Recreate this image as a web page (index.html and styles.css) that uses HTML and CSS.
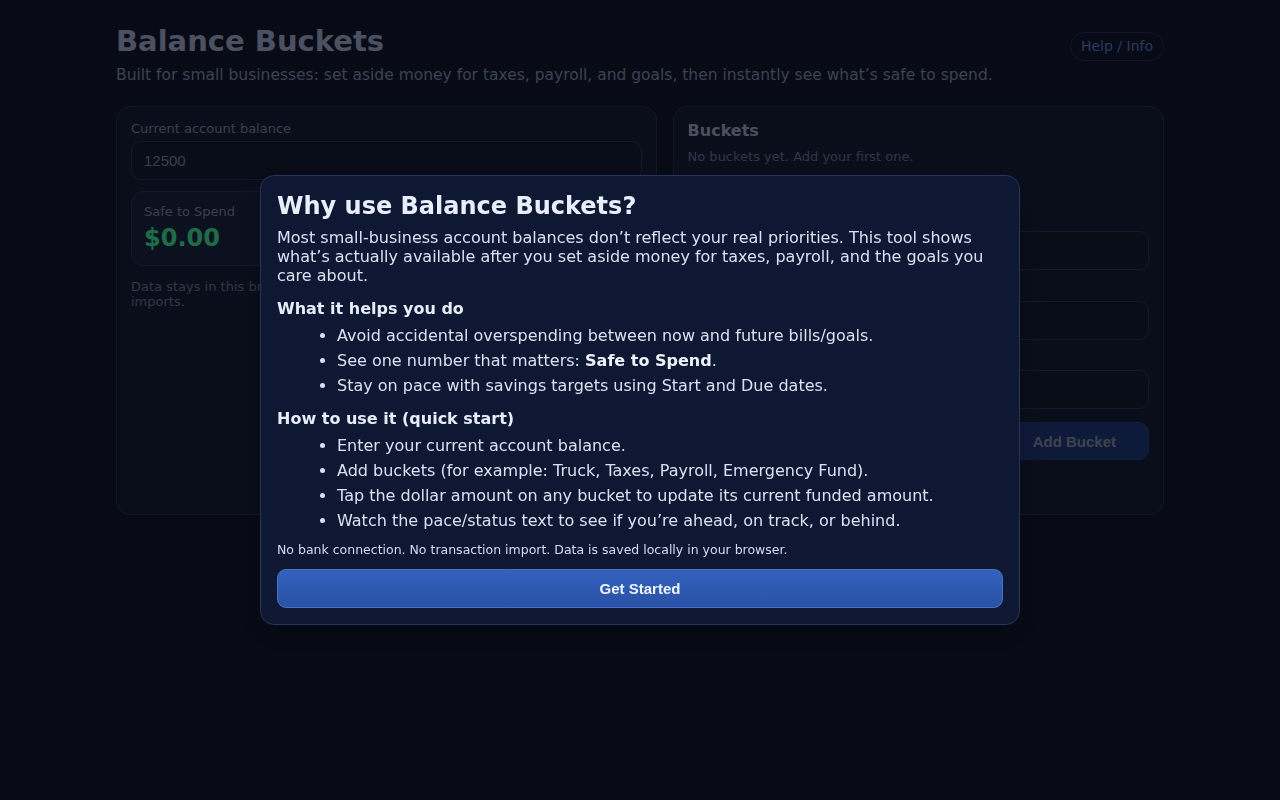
FILE: index.html
```html
<!DOCTYPE html>
<html lang="en">
<head>
<meta charset="utf-8">
<title>Balance Buckets</title>
<link rel="stylesheet" href="styles.css">
</head>
<body>
<div class="page">
  <header class="header">
    <div class="brand">
      <h1 class="title">Balance Buckets</h1>
      <p class="subtitle">Built for small businesses: set aside money for taxes, payroll, and goals, then instantly see what’s safe to spend.</p>
    </div>
    <button class="help-btn" type="button">Help / Info</button>
  </header>

  <main class="cards">
    <section class="card">
      <label class="field-label" for="balance">Current account balance</label>
      <input class="input" id="balance" type="text" placeholder="12500">
      <div class="safe-box">
        <div class="safe-label">Safe to Spend</div>
        <div class="safe-value">$0.00</div>
      </div>
      <p class="muted-note">Data stays in this browser. No bank connection and no transaction or file imports.</p>
    </section>

    <section class="card">
      <h2 class="card-title">Buckets</h2>
      <p class="empty">No buckets yet. Add your first one.</p>
      <h3 class="form-title">Add a bucket</h3>
      <div class="form">
        <div class="form-row">
          <label class="field-label" for="bname">Bucket name</label>
          <input class="input" id="bname" type="text">
        </div>
        <div class="form-row">
          <label class="field-label" for="btarget">Target amount</label>
          <input class="input" id="btarget" type="text">
        </div>
        <div class="form-row">
          <label class="field-label" for="bdue">Due date</label>
          <input class="input" id="bdue" type="text">
        </div>
        <div class="form-actions">
          <button class="add-btn" type="button">Add Bucket</button>
        </div>
      </div>
    </section>
  </main>
</div>

<div class="backdrop">
  <div class="modal" role="dialog" aria-labelledby="modal-title">
    <h2 class="modal-title" id="modal-title">Why use Balance Buckets?</h2>
    <p class="modal-text">Most small-business account balances don’t reflect your real priorities. This tool shows what’s actually available after you set aside money for taxes, payroll, and the goals you care about.</p>
    <h3 class="modal-heading">What it helps you do</h3>
    <ul class="modal-list">
      <li>Avoid accidental overspending between now and future bills/goals.</li>
      <li>See one number that matters: <strong>Safe to Spend</strong>.</li>
      <li>Stay on pace with savings targets using Start and Due dates.</li>
    </ul>
    <h3 class="modal-heading">How to use it (quick start)</h3>
    <ul class="modal-list">
      <li>Enter your current account balance.</li>
      <li>Add buckets (for example: Truck, Taxes, Payroll, Emergency Fund).</li>
      <li>Tap the dollar amount on any bucket to update its current funded amount.</li>
      <li>Watch the pace/status text to see if you’re ahead, on track, or behind.</li>
    </ul>
    <p class="modal-note">No bank connection. No transaction import. Data is saved locally in your browser.</p>
    <button class="start-btn" type="button">Get Started</button>
  </div>
</div>
</body>
</html>
```

FILE: styles.css
```css
* { box-sizing: border-box; }

html, body {
  margin: 0;
  height: 100%;
}

body {
  background: #121831;
  color: #a4b2d8;
  font-family: "DejaVu Sans", "Noto Sans", sans-serif;
  font-size: 16px;
  line-height: 1.2;
}

.page {
  max-width: 1080px;
  margin: 0 auto;
  padding: 24px 16px;
}

.header {
  display: flex;
  justify-content: space-between;
  align-items: flex-start;
  gap: 16px;
}

.title {
  margin: 0;
  font-size: 29px;
  font-weight: 700;
  line-height: 1.2;
  color: #a6b3d6;
}

.subtitle {
  margin: 7px 0 0;
  font-size: 15.5px;
  line-height: 19px;
  color: #8393b6;
}

.help-btn {
  margin-top: 8px;
  padding: 5px 10px;
  border: 1px solid #26335a;
  border-radius: 999px;
  background: transparent;
  color: #5f7fd8;
  font-family: "DejaVu Sans", sans-serif;
  font-size: 14px;
  line-height: 1.2;
}

.cards {
  display: grid;
  grid-template-columns: 1.1fr 1fr;
  gap: 16px;
  margin-top: 21px;
  min-height: 409px;
}

.card {
  background: #18203c;
  border: 1px solid #27334f;
  border-radius: 14px;
  padding: 14px;
  display: flex;
  flex-direction: column;
}

.field-label {
  display: block;
  font-size: 13px;
  color: #7f8dab;
  margin-bottom: 5px;
}

.input {
  display: block;
  width: 100%;
  height: 39px;
  padding: 0 12px;
  background: #151d36;
  border: 1px solid #2c3857;
  border-radius: 10px;
  color: #c8d2ea;
  font-family: "Liberation Sans", Arial, sans-serif;
  font-size: 15px;
}

.input::placeholder { color: #7e8ba8; }

.safe-box {
  margin-top: 11px;
  padding: 12px;
  background: #1c2645;
  border: 1px solid #2a3859;
  border-radius: 12px;
}

.safe-label {
  font-size: 13px;
  color: #7f8dab;
}

.safe-value {
  margin-top: 4px;
  font-size: 24px;
  font-weight: 700;
  color: #45ee9e;
}

.muted-note {
  margin: 14px 0 0;
  font-size: 13px;
  line-height: 1.15;
  color: #6c78a0;
}

.card-title {
  margin: 0;
  font-size: 16px;
  font-weight: 700;
  color: #a4b0cf;
}

.empty {
  margin: 9px 0 0;
  font-size: 13px;
  color: #6b77a0;
}

.form-title {
  margin: 20px 0 0;
  font-size: 15px;
  font-weight: 700;
  color: #a4b0cf;
}

.form {
  display: flex;
  flex-direction: column;
  gap: 10px;
  margin-top: 8px;
}

.form-actions {
  display: flex;
  justify-content: flex-end;
  margin-top: 3px;
}

.add-btn {
  height: 38px;
  padding: 0 32px;
  border: 1px solid #2a3f7c;
  border-radius: 10px;
  background: #213a7e;
  color: #8b95b0;
  font-family: "Liberation Sans", Arial, sans-serif;
  font-size: 15px;
  font-weight: 700;
}

/* modal */
.backdrop {
  position: fixed;
  inset: 0;
  background: rgba(0, 0, 0, 0.55);
  display: flex;
  align-items: center;
  justify-content: center;
}

.modal {
  width: 760px;
  padding: 16px;
  background: #0f1832;
  border: 1px solid #26355a;
  border-radius: 14px;
  box-shadow: 0 10px 30px rgba(0, 0, 0, 0.25);
  color: #d8e0f0;
}

.modal-title {
  margin: 0 0 7.2px;
  font-size: 24px;
  font-weight: 700;
  line-height: 1.2;
  color: #e8eefb;
}

.modal-text {
  margin: 0;
  font-size: 16px;
  line-height: 1.2;
}

.modal-heading {
  margin: 13.3px 0 8px;
  font-size: 16px;
  font-weight: 700;
  line-height: 1.2;
  color: #e6ecf8;
}

.modal-list {
  margin: 0;
  padding-left: 60px;
}

.modal-list li {
  line-height: 1.2;
  margin-bottom: 5.8px;
}

.modal-list li:last-child { margin-bottom: 0; }

.modal-list strong { color: #eef2fb; }

.modal-note {
  margin: 12px 0;
  font-size: 12.5px;
  line-height: 1.2;
  color: #d2dbec;
}

.start-btn {
  display: block;
  width: 100%;
  height: 39px;
  border: 1px solid #4a70c6;
  border-radius: 9px;
  background: linear-gradient(180deg, #3262bd 0%, #2a51a6 100%);
  color: #eef3ff;
  font-family: "Liberation Sans", Arial, sans-serif;
  font-size: 15px;
  font-weight: 700;
}
```
